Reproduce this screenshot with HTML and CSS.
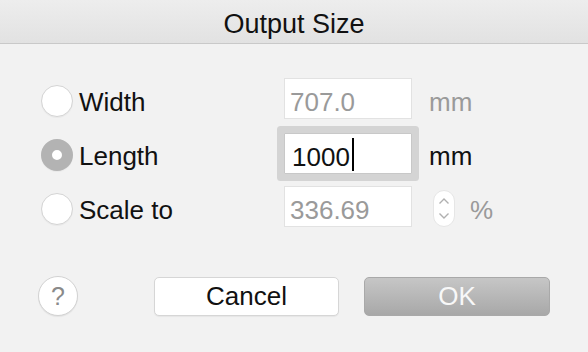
FILE: index.html
```html
<!DOCTYPE html>
<html lang="en">
<head>
    <meta charset="UTF-8">
    <title>Output Size</title>
    <link rel="stylesheet" href="styles.css">
</head>
<body>
    <div class="titlebar">Output Size</div>

    <div class="options">
        <div class="row">
            <div class="choice">
                <span class="radio"></span>
                <span class="label">Width</span>
            </div>
            <div class="field disabled">707.0</div>
            <span class="unit disabled">mm</span>
        </div>

        <div class="row">
            <div class="choice">
                <span class="radio checked"></span>
                <span class="label">Length</span>
            </div>
            <div class="field focused">1000<span class="caret"></span></div>
            <span class="unit">mm</span>
        </div>

        <div class="row">
            <div class="choice">
                <span class="radio"></span>
                <span class="label">Scale to</span>
            </div>
            <div class="field disabled">336.69</div>
            <span class="stepper">
                <svg width="22" height="37" viewBox="0 0 22 37">
                    <path d="M6.5 13.5 L11 9 L15.5 13.5" fill="none" stroke="#b0b0b0" stroke-width="1.4"/>
                    <path d="M6.5 23.5 L11 28 L15.5 23.5" fill="none" stroke="#b0b0b0" stroke-width="1.4"/>
                </svg>
            </span>
            <span class="unit disabled percent">%</span>
        </div>
    </div>

    <div class="actions">
        <button class="help">?</button>
        <button class="cancel">Cancel</button>
        <button class="ok" disabled>OK</button>
    </div>
</body>
</html>
```

FILE: styles.css
```css
body {
    margin: 0;
    background-color: #f2f2f2;
    font-family: "Liberation Sans", Arial, sans-serif;
    color: #111111;
    height: 352px;
    overflow: hidden;
}
.titlebar {
    box-sizing: border-box;
    height: 44px;
    padding-top: 5px;
    line-height: 38px;
    text-align: center;
    font-size: 27px;
    background: linear-gradient(#ededed, #e2e2e2);
    border-bottom: 1px solid #c9c9c9;
}
.options {
    padding-top: 27px;
}
.row {
    display: flex;
    align-items: flex-start;
    height: 54px;
}
.choice {
    display: flex;
    align-items: flex-start;
    width: 243px;
    margin-left: 41px;
}
.radio {
    box-sizing: border-box;
    width: 32px;
    height: 32px;
    margin-top: 14px;
    border-radius: 50%;
    background: #ffffff;
    border: 1px solid #d4d4d4;
    box-shadow: 0 1px 1px rgba(0,0,0,0.04);
}
.radio.checked {
    border: 11.5px solid #b3b3b3;
    background: #ffffff;
}
.label {
    margin-left: 6px;
    margin-top: 16px;
    font-size: 26px;
    line-height: 30px;
}
.field {
    box-sizing: border-box;
    width: 128px;
    height: 41px;
    margin-top: 7px;
    padding: 8px 0 0 5px;
    font-size: 26px;
    line-height: 30px;
    background: #ffffff;
    border: 1px solid #e2e2e2;
    display: flex;
    align-items: flex-start;
}
.field.focused {
    margin-top: 8px;
    border-color: #c8c8c8;
    border-radius: 1px;
    box-shadow: 0 0 0 7px #d4d4d4;
    padding-left: 7px;
}
.caret {
    display: inline-block;
    width: 2px;
    height: 33px;
    margin-top: -4px;
    margin-left: 2px;
    background: #000000;
}
.disabled {
    color: #9a9a9a;
}
.unit {
    margin-left: 17px;
    margin-top: 16px;
    font-size: 26px;
    line-height: 30px;
}
.stepper {
    box-sizing: border-box;
    width: 22px;
    height: 37px;
    margin-top: 11px;
    margin-left: 21px;
    border-radius: 11px;
    background: #ffffff;
    border: 1px solid #e6e6e6;
    display: flex;
    align-items: center;
    justify-content: center;
}
.stepper svg {
    display: block;
    flex: none;
}
.unit.percent {
    margin-left: 15px;
}
.actions {
    display: flex;
    align-items: center;
    margin-top: 43px;
    padding-left: 38px;
}
button {
    font-family: "Liberation Sans", Arial, sans-serif;
    box-sizing: border-box;
    padding: 0;
    cursor: pointer;
}
.help {
    width: 40px;
    height: 40px;
    border-radius: 50%;
    background: #ffffff;
    border: 1px solid #d2d2d2;
    box-shadow: 0 1px 1px rgba(0,0,0,0.06);
    color: #8a8a8a;
    font-size: 25px;
    line-height: 36px;
}
.cancel {
    width: 185px;
    height: 39px;
    margin-left: 76px;
    border-radius: 5px;
    background: #ffffff;
    border: 1px solid #d6d6d6;
    box-shadow: 0 1px 1px rgba(0,0,0,0.05);
    color: #111111;
    font-size: 26px;
}
.ok {
    width: 186px;
    height: 39px;
    margin-left: 25px;
    border-radius: 5px;
    background: linear-gradient(#c6c6c6, #a8a8a8);
    border: 1px solid #a9a9a9;
    color: #f8f8f8;
    font-size: 26px;
}
```
